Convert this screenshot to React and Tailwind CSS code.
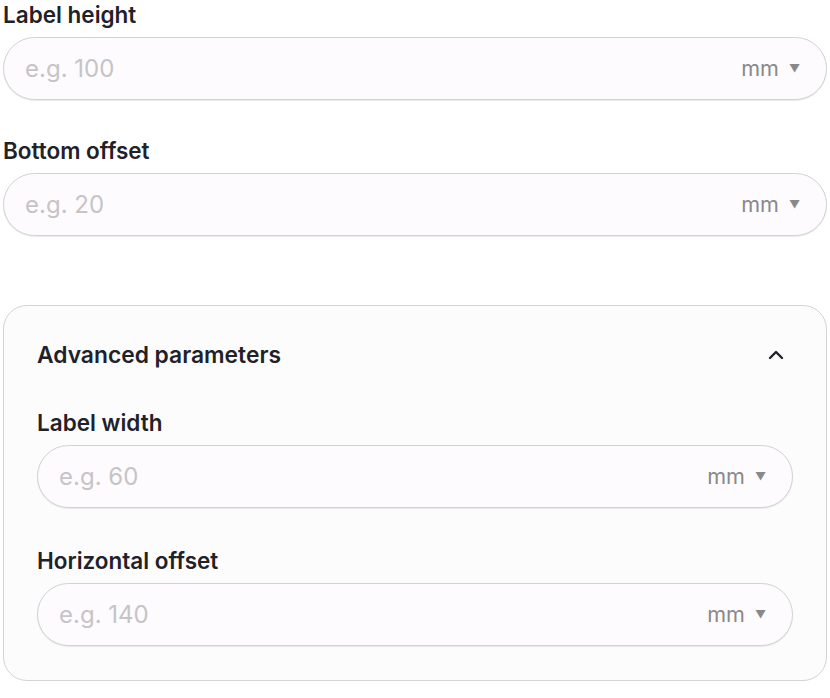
import { ChevronUp } from "lucide-react"

function Field({ label, placeholder }) {
  return (
    <div className="flex flex-col">
      <p className="mb-2 text-[22.5px] leading-[28px] font-semibold text-[#1f2228]">{label}</p>
      <div className="flex h-[63px] items-center rounded-full border border-[#d3d1d4] bg-[#fdfbfd] pl-[21px] pr-[26px] shadow-[0_1px_1px_rgba(0,0,0,0.08)]">
        <input
          placeholder={placeholder}
          className="min-w-0 flex-1 bg-transparent text-[24px] text-[#333] outline-none placeholder:text-[#c6c4c7]"
        />
        <span className="text-[21.5px] text-[#8a888b]">mm</span>
        <span className="ml-[10px] text-[11px] text-[#8a888b]">▼</span>
      </div>
    </div>
  )
}

export default function App() {
  return (
    <div className="min-h-screen bg-white px-[3px] pt-[1px] font-['Inter',sans-serif]">
      <div className="flex flex-col gap-[37px]">
        <Field label="Label height" placeholder="e.g. 100" />
        <Field label="Bottom offset" placeholder="e.g. 20" />
      </div>

      {/* Advanced */}
      <div className="mt-[69px] rounded-[24px] border border-[#d4d3d5] bg-[#fcfcfc] px-[33px] pt-[35px] pb-[34px]">
        <div className="flex items-center justify-between">
          <p className="text-[22.8px] leading-[28px] font-semibold text-[#1f2228]">Advanced parameters</p>
          <ChevronUp size={24} strokeWidth={2.4} className="mr-[5px] text-[#1f2228]" />
        </div>
        <div className="mt-[40px] flex flex-col gap-[39px]">
          <Field label="Label width" placeholder="e.g. 60" />
          <Field label="Horizontal offset" placeholder="e.g. 140" />
        </div>
      </div>
    </div>
  )
}
